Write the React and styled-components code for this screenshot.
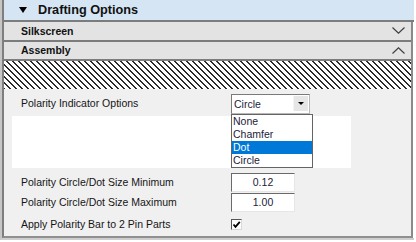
import React from 'react';
import styled, { createGlobalStyle } from 'styled-components';

const GlobalStyle = createGlobalStyle`
  html, body {
    margin: 0;
    padding: 0;
    background: #ffffff;
  }
  body {
    font-family: 'Liberation Sans', Arial, sans-serif;
  }
`;

const Frame = styled.div`
  width: 414px;
  height: 240px;
  border-left: 2px solid #c6c6c6;
  border-bottom: 2px solid #cfcfcf;
  box-sizing: border-box;
`;

const Panel = styled.div`
  width: 411px;
  height: 238px;
  box-sizing: border-box;
  border-left: 2px solid #7e7e7e;
  border-right: 2px solid #8a8a8a;
  border-bottom: 2px solid #8f8f8f;
  background: #f0f0f0;
  display: flex;
  flex-direction: column;
`;

const Header = styled.div`
  height: 20px;
  margin-right: -3px;
  background: #d6e5f4;
  border-bottom: 2px solid #7c7c7c;
  display: flex;
  align-items: center;
  padding-left: 15px;
  gap: 11px;
  font-weight: bold;
  font-size: 12.7px;
  color: #111;
`;

const Triangle = styled.span`
  width: 0;
  height: 0;
  border-left: 4px solid transparent;
  border-right: 4px solid transparent;
  border-top: 6px solid #000;
  margin-top: 1px;
`;

const SectionRow = styled.div`
  height: 18px;
  background: #e3e3e3;
  border-bottom: 2px solid #7c7c7c;
  display: flex;
  align-items: center;
  justify-content: space-between;
  padding: 0 6px 0 17px;
  font-weight: bold;
  font-size: 10.5px;
  color: #111;
`;

const Hatch = styled.div`
  height: 28px;
  background-color: #ffffff;
  background-image: repeating-linear-gradient(
    45deg,
    #2b2b2b 0px,
    #2b2b2b 1.2px,
    #ffffff 1.2px,
    #ffffff 4.24px
  );
`;

const FieldRow = styled.div`
  display: grid;
  grid-template-columns: 210px auto;
  align-items: ${(p) => p.$align || 'center'};
  height: ${(p) => p.$h}px;
  padding-left: 17px;
  padding-top: ${(p) => p.$pt || 0}px;
  box-sizing: border-box;
  font-size: 10.5px;
  color: #151515;
`;

const Label = styled.span`
  white-space: nowrap;
`;

const SelectWrap = styled.div`
  position: relative;
  width: 79px;
`;

const SelectBox = styled.div`
  height: 20px;
  box-sizing: border-box;
  background: #fff;
  border: 1px solid;
  border-color: #7a7a7a #b8b8b8 #b8b8b8 #7a7a7a;
  display: flex;
  align-items: center;
  justify-content: space-between;
  padding-left: 2px;
  padding-right: 1px;
  font-size: 10.5px;
  color: #1c1c3a;
`;

const DropButton = styled.span`
  width: 14px;
  height: 15px;
  background: #e6e6e6;
  border-left: 1px solid #f4f4f4;
  display: flex;
  align-items: center;
  justify-content: center;
`;

const SmallArrow = styled.span`
  width: 0;
  height: 0;
  border-left: 3px solid transparent;
  border-right: 3px solid transparent;
  border-top: 3px solid #000;
`;

const ListBox = styled.ul`
  position: absolute;
  top: 20px;
  left: 0;
  width: 82px;
  margin: 0;
  padding: 0;
  list-style: none;
  box-sizing: border-box;
  background: #fff;
  border: 1px solid #646464;
  z-index: 2;
`;

const ListItem = styled.li`
  height: 13px;
  line-height: 13px;
  padding-left: 1px;
  font-size: 10.5px;
  color: ${(p) => (p.$active ? '#fff' : '#1c1c3a')};
  background: ${(p) => (p.$active ? '#0078d7' : 'transparent')};
`;

const WhiteArea = styled.div`
  height: 53px;
  width: 339px;
  margin-left: 8px;
  background: #fff;
`;

const FieldsBlock = styled.div`
  padding-top: 4px;
`;

const NumBox = styled.div`
  width: 64px;
  height: 19px;
  box-sizing: border-box;
  background: #fff;
  border: 1px solid;
  border-color: #6a6a6a #e6e6e6 #e6e6e6 #6a6a6a;
  display: flex;
  align-items: center;
  justify-content: center;
  font-size: 10.5px;
  color: #1c1c3a;
`;

const CheckBox = styled.div`
  width: 11px;
  height: 11px;
  box-sizing: border-box;
  background: #fff;
  border: 1px solid;
  border-color: #555 #d8d8d8 #d8d8d8 #555;
  display: flex;
  align-items: center;
  justify-content: center;
`;

const Chevron = ({ up }) => (
  <svg width="13" height="7" viewBox="0 0 13 7">
    <polyline
      points={up ? '0.5,6.5 6.5,0.8 12.5,6.5' : '0.5,0.5 6.5,6.2 12.5,0.5'}
      fill="none"
      stroke="#404040"
      strokeWidth="1.2"
    />
  </svg>
);

const options = ['None', 'Chamfer', 'Dot', 'Circle'];

export default function App() {
  return (
    <>
      <GlobalStyle />
      <Frame>
        <Panel>
          <Header>
            <Triangle />
            <span>Drafting Options</span>
          </Header>
          <SectionRow>
            <span>Silkscreen</span>
            <Chevron />
          </SectionRow>
          <SectionRow>
            <span>Assembly</span>
            <Chevron up />
          </SectionRow>
          <Hatch />
          <FieldRow $h={27} $pt={5} $align="start">
            <Label style={{ paddingTop: 3 }}>Polarity Indicator Options</Label>
            <SelectWrap>
              <SelectBox>
                <span>Circle</span>
                <DropButton>
                  <SmallArrow />
                </DropButton>
              </SelectBox>
              <ListBox>
                {options.map((o) => (
                  <ListItem key={o} $active={o === 'Dot'}>
                    {o}
                  </ListItem>
                ))}
              </ListBox>
            </SelectWrap>
          </FieldRow>
          <WhiteArea />
          <FieldsBlock>
            <FieldRow $h={20}>
              <Label>Polarity Circle/Dot Size Minimum</Label>
              <NumBox>0.12</NumBox>
            </FieldRow>
            <FieldRow $h={20}>
              <Label>Polarity Circle/Dot Size Maximum</Label>
              <NumBox>1.00</NumBox>
            </FieldRow>
            <FieldRow $h={24}>
              <Label>Apply Polarity Bar to 2 Pin Parts</Label>
              <CheckBox>
                <svg width="9" height="9" viewBox="0 0 9 9">
                  <polyline
                    points="1.5,4.5 3.5,6.8 7.8,1.8"
                    fill="none"
                    stroke="#000"
                    strokeWidth="1.8"
                  />
                </svg>
              </CheckBox>
            </FieldRow>
          </FieldsBlock>
        </Panel>
      </Frame>
    </>
  );
}
